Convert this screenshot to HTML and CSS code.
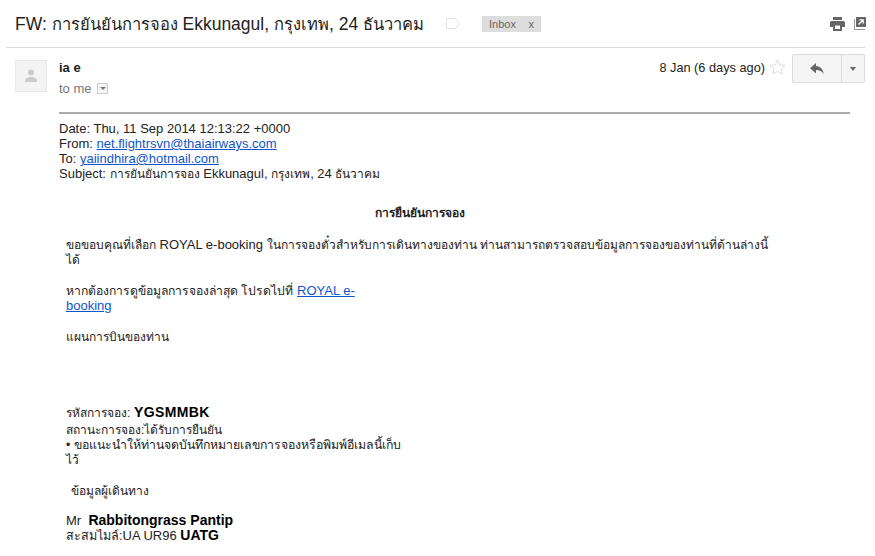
FILE: index.html
```html
<!DOCTYPE html>
<html lang="th">
<head>
    <meta charset="UTF-8">
    <title>FW: การยืนยันการจอง</title>
    <link rel="stylesheet" href="styles.css">
</head>
<body>
    <header class="subject-bar">
        <h1 class="subject">FW: <span class="th">การยันยันการจอง</span> Ekkunagul, <span class="th">กรุงเทพ</span>, 24 <span class="th">ธันวาคม</span></h1>
        <svg class="label-icon" width="14" height="11" viewBox="0 0 14 11"><path d="M.5.5h9l4 5-4 5h-9z" fill="#fff" stroke="#e2e2e2"/></svg>
        <span class="inbox-tag"><span>Inbox</span><span>x</span></span>
        <div class="subject-actions">
            <svg width="15" height="14" viewBox="0 0 15 14"><path d="M3 0h9v3H3zM1.500 4h12A1.500 1.500 0 0 1 15 5.500V10h-3v4H3v-4H0V5.500A1.500 1.500 0 0 1 1.500 4zM5 8.500v3.500h5V8.500z" fill="#666"/></svg>
            <svg width="12" height="13" viewBox="0 0 12 13"><path d="M0 2h1v10h10v1H0z" fill="#999"/><path d="M2 0h10v10H2z" fill="#666"/><path d="M4.500 7.500L9 3M5.500 2.800h3.700v3.700" fill="none" stroke="#fff" stroke-width="1.300"/></svg>
        </div>
    </header>

    <section class="message-head">
        <div class="avatar">
            <svg width="14" height="14" viewBox="0 0 14 14"><circle cx="7" cy="3.500" r="3" fill="#ccc"/><path d="M1 13v-1.500C1 9.500 4 8 7 8s6 1.500 6 3.500V13z" fill="#ccc"/></svg>
        </div>
        <div class="sender">
            <div class="sender-name">ia e</div>
            <div class="sender-to">to me <span class="details-toggle"><i></i></span></div>
        </div>
        <div class="message-meta">
            <span class="message-date">8 Jan (6 days ago)</span>
            <svg class="star" width="17" height="16" viewBox="0 0 17 16"><path d="M8.500 1l2.200 4.900 5.300.5-4 3.500 1.200 5.200-4.700-2.800-4.700 2.800L5 9.900l-4-3.500 5.300-.5z" fill="#fff" stroke="#dcdcdc"/></svg>
            <div class="reply-group">
                <button class="reply-btn"><svg width="14" height="11" viewBox="0 0 14 11"><path d="M6 0v3c4.500.3 7 3.200 7.500 8C12 8.300 9.800 7 6 7v3.500L0 5.200z" fill="#666"/></svg></button>
                <button class="reply-more"><i></i></button>
            </div>
        </div>
    </section>

    <main class="message-body">
        <hr class="forward-rule">
        <div class="forward-head">
            Date: Thu, 11 Sep 2014 12:13:22 +0000<br>
            From: <a href="#">net.flightrsvn@thaiairways.com</a><br>
            To: <a href="#">yaiindhira@hotmail.com</a><br>
            Subject: <span class="th">การยันยันการจอง</span> Ekkunagul, <span class="th">กรุงเทพ</span>, 24 <span class="th">ธันวาคม</span>
        </div>

        <div class="booking">
            <h2 class="confirm-title"><span class="th">การยืนยันการจอง</span></h2>
            <p class="thanks"><span class="th">ขอขอบคุณที่เลือก</span> ROYAL e-booking <span class="th">ในการจองตั๋วสำหรับการเดินทางของท่าน ท่านสามารถตรวจสอบข้อมูลการจองของท่านที่ด้านล่างนี้</span> <span class="th">ได้</span></p>
            <p class="latest"><span class="th">หากต้องการดูข้อมูลการจองล่าสุด โปรดไปที่</span> <a href="#">ROYAL e-</a><br><a href="#">booking</a></p>
            <p class="plan"><span class="th">แผนการบินของท่าน</span></p>
            <div class="booking-info">
                <div class="code-line"><span class="th">รหัสการจอง:</span> <b>YGSMMBK</b></div>
                <span class="th">สถานะการจอง:ได้รับการยืนยัน</span><br>
                <span class="th tip">• ขอแนะนำให้ท่านจดบันทึกหมายเลขการจองหรือพิมพ์อีเมลนี้เก็บ</span> <span class="th">ไว้</span>
            </div>
            <p class="passenger-title"><span class="th">ข้อมูลผู้เดินทาง</span></p>
            <div class="passenger">
                Mr &nbsp;<b>Rabbitongrass Pantip</b><br>
                <span class="th miles-label">สะสมไมล์:</span>UA UR96 <b>UATG</b>
            </div>
        </div>
    </main>
</body>
</html>
```
FILE: styles.css
```css
* {
    margin: 0;
    padding: 0;
    box-sizing: border-box;
}

html, body {
    height: 556px;
    overflow: hidden;
}

body {
    background-color: #fff;
    color: #222;
    font-family: "Liberation Sans", Arial, sans-serif;
    font-size: 13px;
    line-height: 15px;
}

a {
    color: #15c;
}

.th {
    font-size: 12px;
    line-height: 1;
}

.subject-bar {
    display: flex;
    align-items: center;
    height: 48px;
    margin: 0 10px 0 6px;
    padding: 0 0 0 9px;
    border-bottom: 1px solid #ddd;
}

.subject {
    width: 408px;
    font-size: 17.500px;
    font-weight: normal;
    line-height: 24px;
    white-space: nowrap;
}

.subject .th {
    font-size: 16.500px;
}

.label-icon {
    margin-left: 23px;
}

.inbox-tag {
    display: flex;
    justify-content: space-between;
    width: 59px;
    height: 16px;
    margin-left: 22px;
    padding: 0 7px;
    background-color: #ddd;
    color: #666;
    font-size: 11px;
    line-height: 16px;
}

.subject-actions {
    display: flex;
    align-items: center;
    gap: 9px;
    margin-left: auto;
    margin-right: -1px;
}

.message-head {
    display: flex;
    height: 64px;
    margin-right: 10px;
    padding: 12px 0 0 15px;
}

.avatar {
    display: flex;
    align-items: center;
    justify-content: center;
    width: 32px;
    height: 32px;
    background-color: #f4f4f4;
    border: 1px solid #e8e8e8;
}

.sender {
    margin-left: 12px;
}

.sender-name {
    font-weight: bold;
    line-height: 16px;
}

.sender-to {
    margin-top: 5px;
    color: #777;
    line-height: 16px;
}

.details-toggle {
    display: inline-block;
    position: relative;
    width: 11px;
    height: 11px;
    margin-left: 2px;
    background-color: #f5f5f5;
    border: 1px solid #ccc;
    vertical-align: -1px;
}

.details-toggle i {
    position: absolute;
    top: 3px;
    left: 2px;
    border: 3px solid transparent;
    border-top: 3px solid #777;
    border-bottom: 0;
}

.message-meta {
    display: flex;
    align-items: flex-start;
    margin-left: auto;
}

.message-date {
    font-size: 12.750px;
}

.star {
    margin: -1px 6px 0 4px;
}

.reply-group {
    display: flex;
    height: 29px;
    margin-top: -6px;
    background-color: #f5f5f5;
    border: 1px solid #ddd;
    border-radius: 2px;
}

.reply-group button {
    display: flex;
    align-items: center;
    justify-content: center;
    background: none;
    border: 0;
}

.reply-group .reply-btn {
    width: 49px;
    border-right: 1px solid #ddd;
}

.reply-more {
    width: 22px;
}

.reply-more i {
    border: 3.500px solid transparent;
    border-top: 4px solid #666;
    border-bottom: 0;
}

.message-body {
    padding: 0 25px 0 59px;
}

.forward-rule {
    height: 2px;
    margin-bottom: 7px;
    background-color: #aaa;
    border: 0;
}

.booking {
    width: 708px;
    margin: 22px 0 0 7px;
}

.confirm-title {
    margin-bottom: 18px;
    line-height: 15px;
    text-align: center;
}

.thanks {
    margin-bottom: 16px;
}

.latest .th {
    font-size: 12.200px;
}

.plan {
    margin-top: 16px;
    margin-bottom: 60px;
}

.booking-info {
    width: 338px;
}

.code-line {
    margin-bottom: 1px;
    line-height: 16px;
}

.code-line b {
    letter-spacing: .4px;
}

.tip {
    font-size: 12.300px;
}

.passenger-title {
    margin: 16px 0 15px 5px;
}

.miles-label {
    font-size: 12.600px;
}

b {
    color: #000;
    font-size: 14px;
}
```
